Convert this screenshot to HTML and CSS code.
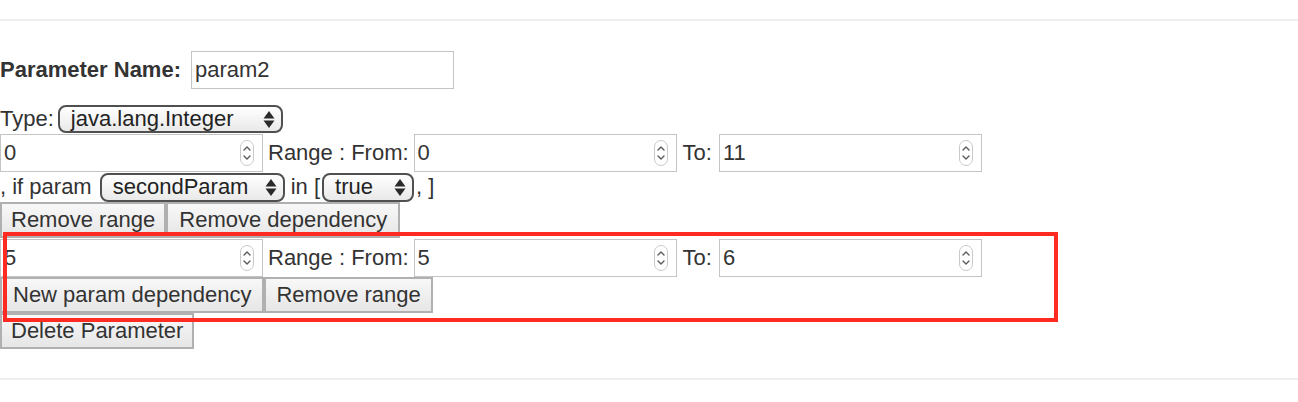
FILE: index.html
```html
<!DOCTYPE html>
<html>
<head>
<meta charset="utf-8">
<link rel="stylesheet" href="styles.css">
</head>
<body>
<div class="page">
  <div class="rule"></div>
  <div class="param">
    <div class="row row-name">
      <span class="name-label">Parameter Name:</span>
      <div class="field"><span class="val">param2</span></div>
    </div>
    <div class="row row-type">
      <span class="lbl lbl-type">Type:</span>
      <div class="select sel-type"><span>java.lang.Integer</span>
        <svg class="arrows" width="12" height="19" viewBox="0 0 12 19"><polygon points="0.5,8.5 6,1 11.5,8.5" /><polygon points="0.5,10.5 11.5,10.5 6,18" /></svg>
      </div>
    </div>
    <div class="row row-range">
      <div class="field"><span class="val">0</span>
        <svg class="spin" width="14" height="26" viewBox="0 0 14 26"><rect x="0.5" y="0.5" width="13" height="25" rx="6.5" /><path d="M4 10 L7 7 L10 10" /><path d="M4 16 L7 19 L10 16" /></svg>
      </div>
      <span class="lbl lbl-range">Range : From:</span>
      <div class="field"><span class="val">0</span>
        <svg class="spin" width="14" height="26" viewBox="0 0 14 26"><rect x="0.5" y="0.5" width="13" height="25" rx="6.5" /><path d="M4 10 L7 7 L10 10" /><path d="M4 16 L7 19 L10 16" /></svg>
      </div>
      <span class="lbl lbl-to">To:</span>
      <div class="field"><span class="val">11</span>
        <svg class="spin" width="14" height="26" viewBox="0 0 14 26"><rect x="0.5" y="0.5" width="13" height="25" rx="6.5" /><path d="M4 10 L7 7 L10 10" /><path d="M4 16 L7 19 L10 16" /></svg>
      </div>
    </div>
    <div class="row row-cond">
      <span class="lbl lbl-if">, if param</span>
      <div class="select sel-param"><span>secondParam</span>
        <svg class="arrows" width="12" height="19" viewBox="0 0 12 19"><polygon points="0.5,8.5 6,1 11.5,8.5" /><polygon points="0.5,10.5 11.5,10.5 6,18" /></svg>
      </div>
      <span class="lbl lbl-in">in [</span>
      <div class="select sel-val"><span>true</span>
        <svg class="arrows" width="12" height="19" viewBox="0 0 12 19"><polygon points="0.5,8.5 6,1 11.5,8.5" /><polygon points="0.5,10.5 11.5,10.5 6,18" /></svg>
      </div>
      <span class="lbl lbl-close">, ]</span>
    </div>
    <div class="row row-btns">
      <button class="btn btn-narrow">Remove range</button><button class="btn btn-wide">Remove dependency</button>
    </div>
    <div class="range-block">
      <div class="row row-range">
        <div class="field"><span class="val">5</span>
          <svg class="spin" width="14" height="26" viewBox="0 0 14 26"><rect x="0.5" y="0.5" width="13" height="25" rx="6.5" /><path d="M4 10 L7 7 L10 10" /><path d="M4 16 L7 19 L10 16" /></svg>
        </div>
        <span class="lbl lbl-range">Range : From:</span>
        <div class="field"><span class="val">5</span>
          <svg class="spin" width="14" height="26" viewBox="0 0 14 26"><rect x="0.5" y="0.5" width="13" height="25" rx="6.5" /><path d="M4 10 L7 7 L10 10" /><path d="M4 16 L7 19 L10 16" /></svg>
        </div>
        <span class="lbl lbl-to">To:</span>
        <div class="field"><span class="val">6</span>
          <svg class="spin" width="14" height="26" viewBox="0 0 14 26"><rect x="0.5" y="0.5" width="13" height="25" rx="6.5" /><path d="M4 10 L7 7 L10 10" /><path d="M4 16 L7 19 L10 16" /></svg>
        </div>
      </div>
      <div class="row row-btns2">
        <button class="btn btn-wide">New param dependency</button><button class="btn">Remove range</button>
      </div>
    </div>
    <div class="row row-del">
      <button class="btn btn-narrow">Delete Parameter</button>
    </div>
  </div>
  <div class="rule rule-bottom"></div>
</div>
</body>
</html>
```

FILE: styles.css
```css
html, body {
  margin: 0;
  padding: 0;
  background: #ffffff;
}

body {
  font-family: "Liberation Sans", Arial, Helvetica, sans-serif;
  font-size: 22px;
  color: #333333;
}

.page {
  padding-top: 19px;
}

.rule {
  height: 2px;
  background: #eeeeee;
}

.rule-bottom {
  margin-top: 29px;
}

.param {
  display: flex;
  flex-direction: column;
  align-items: flex-start;
}

.row {
  display: flex;
  align-items: center;
  white-space: nowrap;
}

.row-name {
  margin-top: 30px;
  height: 38px;
}

.name-label {
  font-weight: bold;
  margin-right: 10px;
}

.row-type {
  margin-top: 16px;
  height: 28px;
}

.row-range {
  height: 38px;
}

.row-type + .row-range {
  margin-top: 1px;
}

.row-cond {
  height: 30px;
}

.row-btns {
  height: 36px;
}

.range-block {
  position: relative;
  margin-top: 1px;
  display: flex;
  flex-direction: column;
  align-items: flex-start;
}

.range-block::after {
  content: "";
  position: absolute;
  left: 3px;
  top: -7px;
  width: 1055px;
  height: 90px;
  box-sizing: border-box;
  border: 4px solid #ff2b22;
  pointer-events: none;
}

.row-btns2 {
  height: 36px;
}

.row-del {
  height: 36px;
}

.lbl-type {
  margin-right: 4px;
}

.lbl-range {
  margin: 0 5px;
}

.lbl-to {
  margin: 0 7px 0 6px;
}

.lbl-if {
  margin-right: 8px;
}

.lbl-in {
  margin-left: 6px;
  margin-right: 2px;
}

.lbl-close {
  margin-left: 2px;
}

.field {
  box-sizing: border-box;
  width: 263px;
  height: 38px;
  border: 1px solid #c4c4c4;
  background: #ffffff;
  padding-left: 3px;
  display: flex;
  align-items: center;
  justify-content: space-between;
  color: #333333;
}

.spin {
  margin-right: 8px;
  flex: none;
}

.spin rect {
  fill: #ffffff;
  stroke: #c9c9c9;
  stroke-width: 1;
}

.spin path {
  fill: none;
  stroke: #5a5a5a;
  stroke-width: 1.4;
  stroke-linecap: round;
  stroke-linejoin: round;
}

.select {
  box-sizing: border-box;
  height: 29px;
  border: 2px solid #505050;
  border-radius: 8px;
  background: linear-gradient(#ffffff, #e9e9e9);
  display: flex;
  align-items: center;
  justify-content: space-between;
  padding: 0 6px 0 11px;
  color: #222222;
}

.sel-type {
  width: 225px;
  height: 28px;
}

.sel-param {
  width: 185px;
}

.sel-val {
  width: 92px;
}

.arrows {
  flex: none;
  display: block;
}

.arrows polygon {
  fill: #2a2a2a;
}

.btn {
  box-sizing: border-box;
  height: 36px;
  margin: 0;
  padding: 0 10px;
  font-family: "Liberation Sans", Arial, Helvetica, sans-serif;
  font-size: 22px;
  color: #333333;
  border: 2px solid #b0b0b0;
  border-radius: 0;
  background: linear-gradient(#f8f8f8, #e6e6e6);
  white-space: nowrap;
}

.btn-narrow {
  padding: 0 9px;
}

.btn-wide {
  padding: 0 11px;
}
```
